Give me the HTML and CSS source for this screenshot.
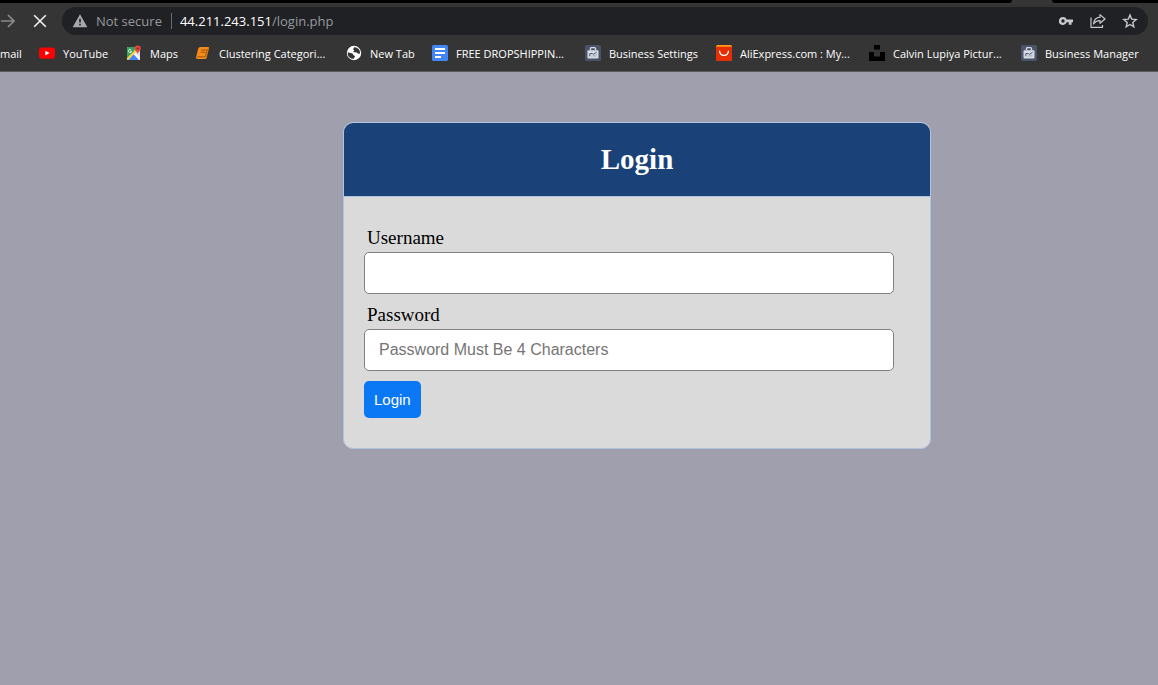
FILE: index.html
```html
<!DOCTYPE html>
<html lang="en">
<head>
<meta charset="utf-8">
<title>Login</title>
<link rel="stylesheet" href="styles.css">
</head>
<body>
<svg class="defs" width="0" height="0" aria-hidden="true">
  <symbol id="briefcase" viewBox="0 0 16 16">
    <rect width="16" height="16" rx="1.5" fill="#4a5468"/>
    <path d="M5.500 5.500V3.500Q5.500 2.600 6.400 2.600H9.600Q10.500 2.600 10.500 3.500V5.500" fill="none" stroke="#d5dae3" stroke-width="1.400"/>
    <rect x="2.500" y="5.200" width="11" height="8.300" rx=".8" fill="#d5dae3"/>
    <path d="M4.800 11.200V8.600H7.400L8.400 9.500L11.600 7.200" fill="none" stroke="#4a5468" stroke-width="1"/>
    <path d="M5 11.500L11.500 11.500L11.500 9Z" fill="#b3bac8"/>
  </symbol>
</svg>

<header class="browser">
  <div class="tabstrip"><span class="tab-edge tab-edge-left"></span><span class="tab-edge tab-edge-right"></span></div>
  <div class="toolbar">
    <button class="tool" type="button" aria-label="Forward"><svg width="18" height="18" viewBox="0 0 18 18" fill="none" stroke="#8b8b8d" stroke-width="1.7"><path d="M2 9H15M9 3L15 9L9 15"/></svg></button>
    <button class="tool" type="button" aria-label="Stop loading"><svg width="18" height="18" viewBox="0 0 18 18" fill="none" stroke="#f1f1f1" stroke-width="1.6"><path d="M3.2 3.2L14.8 14.8M14.8 3.2L3.2 14.8"/></svg></button>
    <div class="address">
      <svg width="16" height="16" viewBox="0 0 16 16"><path d="M8 1.2L15.4 14.2H.6Z" fill="#a5a8ac"/><path d="M8 5.8V9.4M8 10.8V12.5" stroke="#202124" stroke-width="1.6"/></svg>
      <span class="security">Not secure</span>
      <span class="url"><b>44.211.243.151</b>/login.php</span>
      <button class="action" type="button" aria-label="Saved passwords"><svg width="16" height="16" viewBox="0 0 16 16"><path fill="#c7c9cc" fill-rule="evenodd" d="M5 4A4 4 0 1 0 8.7 9.3H10.8V11.7H13.6V9.3H15V6.4H8.7A4 4 0 0 0 5 4ZM5 6.3A1.7 1.7 0 1 1 5 9.7A1.7 1.7 0 1 1 5 6.3Z"/></svg></button>
      <button class="action" type="button" aria-label="Share this page"><svg width="16" height="16" viewBox="0 0 16 16" fill="none" stroke="#c7c9cc" stroke-width="1.2"><path d="M1 4.5V14.4H12.5V12M10 1.6L15 6L10 10.3V7.7C7 7.6 5.200 8.600 3.600 11C4 7 6 4.500 10 4.200Z" stroke-linejoin="round"/></svg></button>
      <button class="action" type="button" aria-label="Bookmark this page"><svg width="16" height="16" viewBox="0 0 16 16" fill="none" stroke="#c7c9cc" stroke-width="1.4"><path d="M8 2L9.700 6.100L14.200 6.500L10.800 9.400L11.800 13.800L8 11.500L4.200 13.800L5.200 9.400L1.800 6.500L6.300 6.100Z"/></svg></button>
    </div>
  </div>
  <nav class="bookmarks" aria-label="Bookmarks">
    <a href="#">mail</a>
    <a href="#"><svg width="16" height="16" viewBox="0 0 16 16"><rect y="2.500" width="16" height="11.200" rx="2.800" fill="#f00"/><path d="M6.300 5.700L10.600 8.100L6.300 10.500Z" fill="#fff"/></svg>YouTube</a>
    <a href="#"><svg width="16" height="16" viewBox="0 0 16 16"><rect x="1" y="2" width="13" height="13" rx="1" fill="#dce0e4"/><path d="M1 3Q1 2 2 2H10L7.500 8L1 14.300Z" fill="#35a35a"/><path d="M2 15L7.700 9.300L13.300 15Z" fill="#4285f4"/><path d="M1 13L9.500 4.500L11 6L2 15Q1 15 1 14Z" fill="#f9cf3e"/><path d="M7.700 9.300L9.500 7.500L14 12V14Q14 15 13 15Z" fill="#f4f4f4"/><path d="M4.900 4.600A1.600 1.600 0 1 0 5.600 6.200H4.200" fill="none" stroke="#fff" stroke-width=".9"/><path d="M11.700.5A3.100 3.100 0 0 0 8.600 3.600C8.600 6 11.300 6.400 11.700 9.400C12.100 6.400 14.800 6 14.800 3.600A3.100 3.100 0 0 0 11.700.5Z" fill="#e34b40"/><circle cx="11.700" cy="3.500" r="1.100" fill="#8a211b"/></svg>Maps</a>
    <a href="#"><svg width="16" height="16" viewBox="0 0 16 16"><path d="M5.200 2H13.300Q14.300 2 14 3L11.700 12.500Q11.300 14 10 14H2.600Q.6 14 1.100 12L3.200 3.700Q3.700 2 5.200 2Z" fill="#f48a18"/><path d="M6.300 5H11.300M5.700 7.200H10.700M2.300 11.800H10.300L12.500 4" fill="none" stroke="#8a4a0c" stroke-width=".8"/></svg>Clustering Categori...</a>
    <a href="#"><svg width="16" height="16" viewBox="0 0 16 16"><circle cx="8" cy="8" r="7.200" fill="#fff"/><path d="M1.800 7.200L5.500 8.300Q7.300 8.600 7.300 10L9 11.200L7.800 13.800Q3 14 1.800 9.500ZM8.500 2.100L7 4.200L8.300 5.600L7 7.100L10.700 7.600Q11.500 9.200 14 8.500Q14.500 3.500 8.500 2.100Z" fill="#353535"/></svg>New Tab</a>
    <a href="#"><svg width="16" height="16" viewBox="0 0 16 16"><rect width="16" height="16" rx="1.500" fill="#4285f4"/><path d="M3 4H13M3 8H13M3 12H9" stroke="#fff" stroke-width="1.800"/></svg>FREE DROPSHIPPIN...</a>
    <a href="#"><svg width="16" height="16"><use href="#briefcase"/></svg>Business Settings</a>
    <a href="#"><svg width="16" height="16" viewBox="0 0 16 16"><rect width="16" height="16" rx="1.800" fill="#ff9b15"/><path d="M0 3Q0 1.800 1.500 1.800H14.500Q16 1.800 16 3V14.200Q16 16 14.200 16H1.800Q0 16 0 14.200Z" fill="#e62e04"/><path d="M3.500 5.700C4 12 12 12 12.500 5.700" fill="none" stroke="#fff" stroke-width="1.300"/></svg>AliExpress.com : My...</a>
    <a href="#"><svg width="16" height="16" viewBox="0 0 16 16"><path d="M5 0H11V4.500H5ZM0 7H5V11.500H11V7H16V16H0Z" fill="#000"/></svg>Calvin Lupiya Pictur...</a>
    <a href="#"><svg width="16" height="16"><use href="#briefcase"/></svg>Business Manager</a>
  </nav>
</header>

<main class="page">
  <section class="card">
    <h1 class="card-title">Login</h1>
    <form class="login">
      <div class="field">
        <label for="username">Username</label>
        <input id="username" name="username" type="text">
      </div>
      <div class="field">
        <label for="password">Password</label>
        <input id="password" name="password" type="password" placeholder="Password Must Be 4 Characters">
      </div>
      <button class="submit" type="submit">Login</button>
    </form>
  </section>
</main>
</body>
</html>
```

FILE: styles.css
```css
* {
  box-sizing: border-box;
}

body {
  margin: 0;
  min-height: 100vh;
  background: #a09fad;
  font-family: "Liberation Serif", "Times New Roman", serif;
}

.defs {
  display: block;
}

.browser {
  background: #353535;
  border-bottom: 1px solid #5d5c62;
  font-family: "Open Sans", "Segoe UI", sans-serif;
  overflow: hidden;
}

.tabstrip {
  display: flex;
  justify-content: space-between;
  height: 3px;
}

.tab-edge {
  background: #000;
}

.tab-edge-left {
  flex: 1;
  margin-right: 40px;
  border-bottom-right-radius: 4px;
}

.tab-edge-right {
  width: 106px;
  border-bottom-left-radius: 4px;
}

.toolbar {
  display: flex;
  align-items: center;
  padding: 4px 10px 0 0;
}

.toolbar button {
  display: flex;
  padding: 0;
  border: 0;
  background: none;
}

.tool {
  margin-right: 13px;
}

.tool:first-child {
  margin-left: -1px;
  margin-right: 14px;
}

.address {
  display: flex;
  flex: 1;
  align-items: center;
  height: 28px;
  padding: 0 10px;
  border-radius: 14px;
  background: #202124;
  color: #96999d;
  font-size: 13px;
}

.security {
  margin: 0 9px 0 8px;
}

.url {
  flex: 1;
  padding-left: 8px;
  border-left: 1px solid #6b6d70;
  line-height: 16px;
}

.url b {
  color: #fff;
  font-weight: 400;
}

.action + .action {
  margin-left: 16px;
}

.bookmarks {
  display: grid;
  grid-template-columns: 39px 87px 69px 151px 86px 153px 131px 153px 152px 1fr;
  align-items: center;
  height: 36px;
}

.bookmarks a {
  display: flex;
  align-items: center;
  gap: 8px;
  color: #fff;
  font-size: 11px;
  text-decoration: none;
  white-space: nowrap;
}

.page {
  padding: 50px 0 50px 116px;
}

.card {
  max-width: 588px;
  margin: 0 auto;
  overflow: hidden;
  border: 1px solid #b0c4de;
  border-radius: 10px;
  background: #dbdada;
}

.card-title {
  margin: 0;
  padding: 20px;
  border-bottom: 1px solid #b0c4de;
  background: #1a4178;
  color: #fff;
  font-size: 29px;
  line-height: 33px;
  text-align: center;
}

.login {
  padding: 30px 36px 30px 20px;
}

.field {
  margin-bottom: 10px;
}

.field label {
  display: block;
  margin: 0 3px 3px;
  font-size: 19px;
  line-height: 22px;
}

.field input {
  display: block;
  width: 100%;
  height: 42px;
  padding: 0 14px;
  border: 1px solid #808080;
  border-radius: 5px;
  background: #fff;
  font: 16px "Liberation Sans", Arial, sans-serif;
}

.field input::placeholder {
  color: #757575;
}

.submit {
  padding: 10px;
  border: 0;
  border-radius: 5px;
  background: #0a78f5;
  color: #fff;
  font: 15px/17px "Liberation Sans", Arial, sans-serif;
}
```
